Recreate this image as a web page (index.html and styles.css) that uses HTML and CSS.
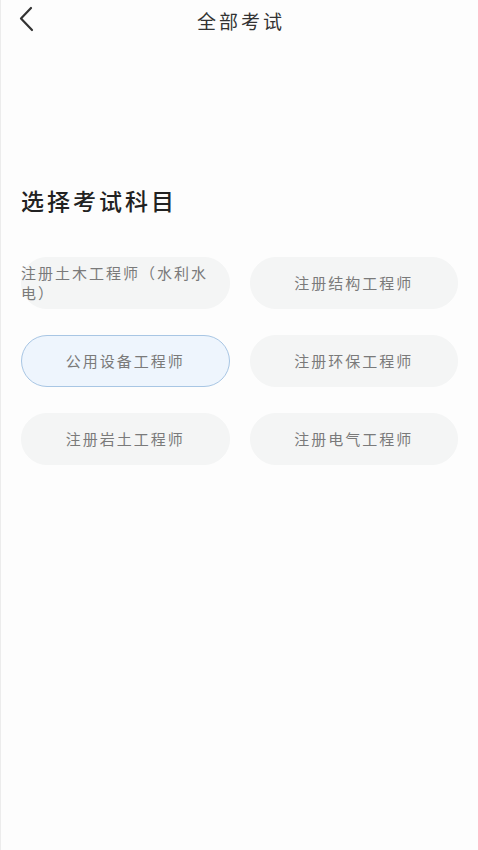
FILE: index.html
```html
<!DOCTYPE html>
<html lang="zh-CN">
<head>
    <meta charset="UTF-8">
    <meta name="viewport" content="width=device-width, initial-scale=1.0">
    <title>全部考试</title>
    <link rel="stylesheet" href="styles.css">
</head>
<body>
    <!-- Top bar -->
    <header class="top-bar">
        <span class="back-btn">
            <svg width="16" height="26" viewBox="0 0 16 26" fill="none" stroke="#333" stroke-width="2.2" stroke-linecap="round" stroke-linejoin="round">
                <path d="M13 2L3 12.5L14 24"/>
            </svg>
        </span>
        <h1 class="page-title">全部考试</h1>
    </header>

    <!-- Subject picker -->
    <main class="picker">
        <h2 class="picker-title">选择考试科目</h2>
        <div class="subject-grid">
            <div class="subject subject-long"><span>注册土木工程师（水利水电）</span></div>
            <div class="subject"><span>注册结构工程师</span></div>
            <div class="subject active"><span>公用设备工程师</span></div>
            <div class="subject"><span>注册环保工程师</span></div>
            <div class="subject"><span>注册岩土工程师</span></div>
            <div class="subject"><span>注册电气工程师</span></div>
        </div>
    </main>
</body>
</html>
```

FILE: styles.css
```css
* {
    margin: 0;
    padding: 0;
    box-sizing: border-box;
}

body {
    font-family: "Noto Sans CJK SC", "Noto Sans", sans-serif;
    background-color: #fdfdfd;
    color: #333;
    min-height: 100vh;
    border-left: 1px solid #ececec;
}

/* Top bar */
.top-bar {
    height: 40px;
    display: flex;
    align-items: center;
    justify-content: center;
    position: relative;
}

.back-btn {
    position: absolute;
    left: 17px;
    top: 6px;
    display: flex;
}

.page-title {
    font-size: 19px;
    font-weight: 400;
    letter-spacing: 3px;
    margin-left: 3px;
    color: #333;
}

/* Subject picker */
.picker {
    padding: 143px 20px 0 20px;
}

.picker-title {
    font-size: 23px;
    font-weight: 500;
    letter-spacing: 3px;
    color: #222;
    line-height: 34px;
    margin-bottom: 40px;
}

.subject-grid {
    display: grid;
    grid-template-columns: 1fr 1fr;
    column-gap: 20px;
    row-gap: 26px;
}

.subject {
    height: 52px;
    border-radius: 26px;
    background: #f4f5f5;
    border: 1px solid #f4f5f5;
    display: flex;
    align-items: center;
    justify-content: center;
    font-size: 15px;
    letter-spacing: 2px;
    line-height: 20px;
    color: #7a7a7a;
}

.subject-long {
    justify-content: flex-start;
}

.subject-long span {
    max-width: 196px;
    margin-left: -1px;
}

.subject.active {
    background: #eef5fd;
    border-color: #a8c6e4;
}
```
